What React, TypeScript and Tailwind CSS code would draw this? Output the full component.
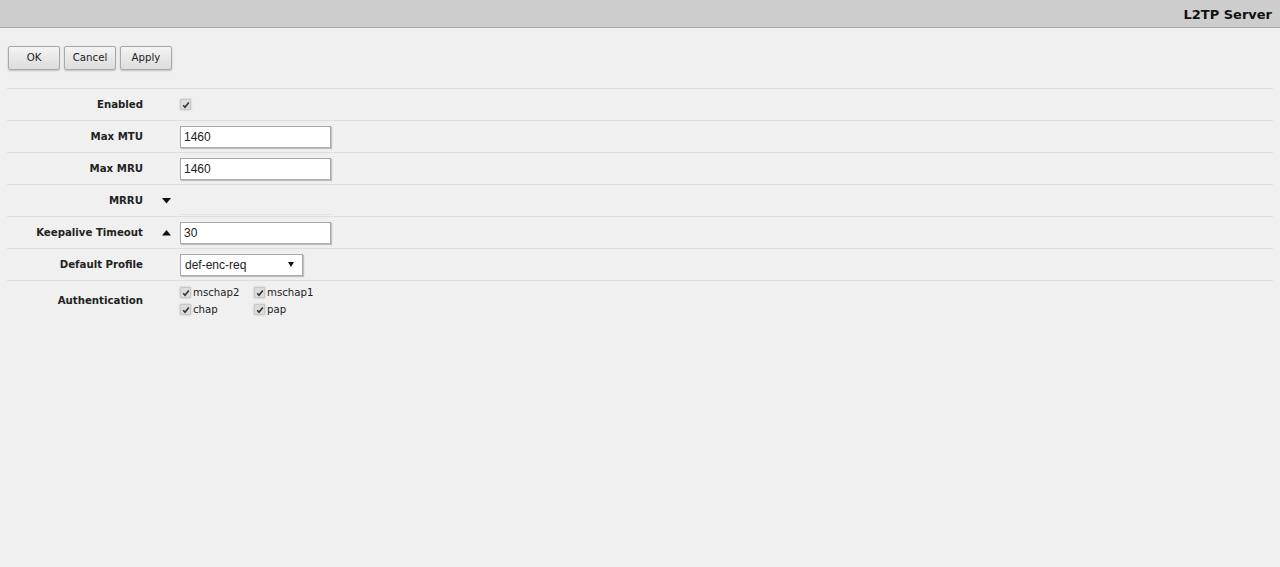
import React from 'react'

const labelCls =
  "w-[136px] shrink-0 text-right text-[10.2px] font-bold text-[#222] font-['Verdana','DejaVu_Sans',sans-serif]"

function Check({ label }: { label?: string }) {
  return (
    <span className="flex h-[14px] items-center gap-[2px]">
      <span className="flex h-[11px] w-[11px] items-center justify-center rounded-[1px] border border-[#c8c8c8] bg-[#dcdcdc] shadow-[0_0_2px_rgba(0,0,0,0.25)]">
        <svg width="8" height="8" viewBox="0 0 8 8">
          <path d="M1.2 4.3 L3 6.2 L6.8 1.4" stroke="#333" strokeWidth="1.6" fill="none" />
        </svg>
      </span>
      {label && (
        <span className="text-[10.2px] text-[#222] font-['Verdana','DejaVu_Sans',sans-serif]">{label}</span>
      )}
    </span>
  )
}

function Row({
  label,
  toggle,
  children,
  tall,
}: {
  label: string
  toggle?: 'up' | 'down'
  children?: React.ReactNode
  tall?: boolean
}) {
  return (
    <div
      className={`flex items-center border-t border-[#dedede] ${tall ? 'h-[41px]' : 'h-[32px]'}`}
    >
      <div className={labelCls}>{label}</div>
      <div className="flex w-[37px] shrink-0 items-center justify-center pl-[10px]">
        {toggle === 'down' && (
          <svg width="9" height="6" viewBox="0 0 9 6">
            <path d="M0 0 H9 L4.5 5.5 Z" fill="#111" />
          </svg>
        )}
        {toggle === 'up' && (
          <svg width="9" height="6" viewBox="0 0 9 6">
            <path d="M0 5.5 H9 L4.5 0 Z" fill="#111" />
          </svg>
        )}
      </div>
      <div className="flex items-center">{children}</div>
    </div>
  )
}

function TextInput({ value }: { value: string }) {
  return (
    <div className="flex h-[22px] w-[151px] items-center border border-[#a9a9a9] bg-white pl-[3px] text-[12px] text-[#222] shadow-[1px_1px_1px_rgba(0,0,0,0.2)] font-['Liberation_Sans','Arial',sans-serif]">
      {value}
    </div>
  )
}

function Btn({ children }: { children: React.ReactNode }) {
  return (
    <button className="flex h-[24px] w-[52px] items-center justify-center rounded-[2px] border border-[#a8a8a8] bg-gradient-to-b from-[#f4f4f4] to-[#dcdcdc] text-[10.2px] text-[#222] shadow-[0_1px_2px_rgba(0,0,0,0.2)] font-['Verdana','DejaVu_Sans',sans-serif]">
      {children}
    </button>
  )
}

export default function App() {
  return (
    <div className="h-[567px] w-full bg-[#f0f0f0]">
      <div className="flex h-[28px] items-center justify-end border-b border-[#a6a6a6] bg-[#cdcdcd] pr-[8px] pt-[3px]">
        <span className="text-[13px] font-bold text-[#111] font-['Verdana','DejaVu_Sans',sans-serif]">
          L2TP Server
        </span>
      </div>
      <div className="px-[7px]">
        <div className="flex gap-[4px] pl-[1px] pt-[18px]">
          <Btn>OK</Btn>
          <Btn>Cancel</Btn>
          <Btn>Apply</Btn>
        </div>
        <div className="mt-[18px]">
          <Row label="Enabled">
            <Check />
          </Row>
          <Row label="Max MTU">
            <TextInput value="1460" />
          </Row>
          <Row label="Max MRU">
            <TextInput value="1460" />
          </Row>
          <Row label="MRRU" toggle="down">
            <div className="mt-[28px] h-px w-[152px] bg-[#e2e2e2]" />
          </Row>
          <Row label="Keepalive Timeout" toggle="up">
            <TextInput value="30" />
          </Row>
          <Row label="Default Profile">
            <div className="flex h-[22px] w-[123px] items-center justify-between border border-[#a9a9a9] bg-white pl-[4px] pr-[8px] text-[12px] text-[#222] shadow-[1px_1px_1px_rgba(0,0,0,0.2)] font-['Liberation_Sans','Arial',sans-serif]">
              <span>def-enc-req</span>
              <svg width="6" height="5" viewBox="0 0 6 5">
                <path d="M0 0 H6 L3 5 Z" fill="#111" />
              </svg>
            </div>
          </Row>
          <Row label="Authentication" tall>
            <div className="grid grid-cols-[74px_auto] gap-y-[3px]">
              <Check label="mschap2" />
              <Check label="mschap1" />
              <Check label="chap" />
              <Check label="pap" />
            </div>
          </Row>
        </div>
      </div>
    </div>
  )
}
